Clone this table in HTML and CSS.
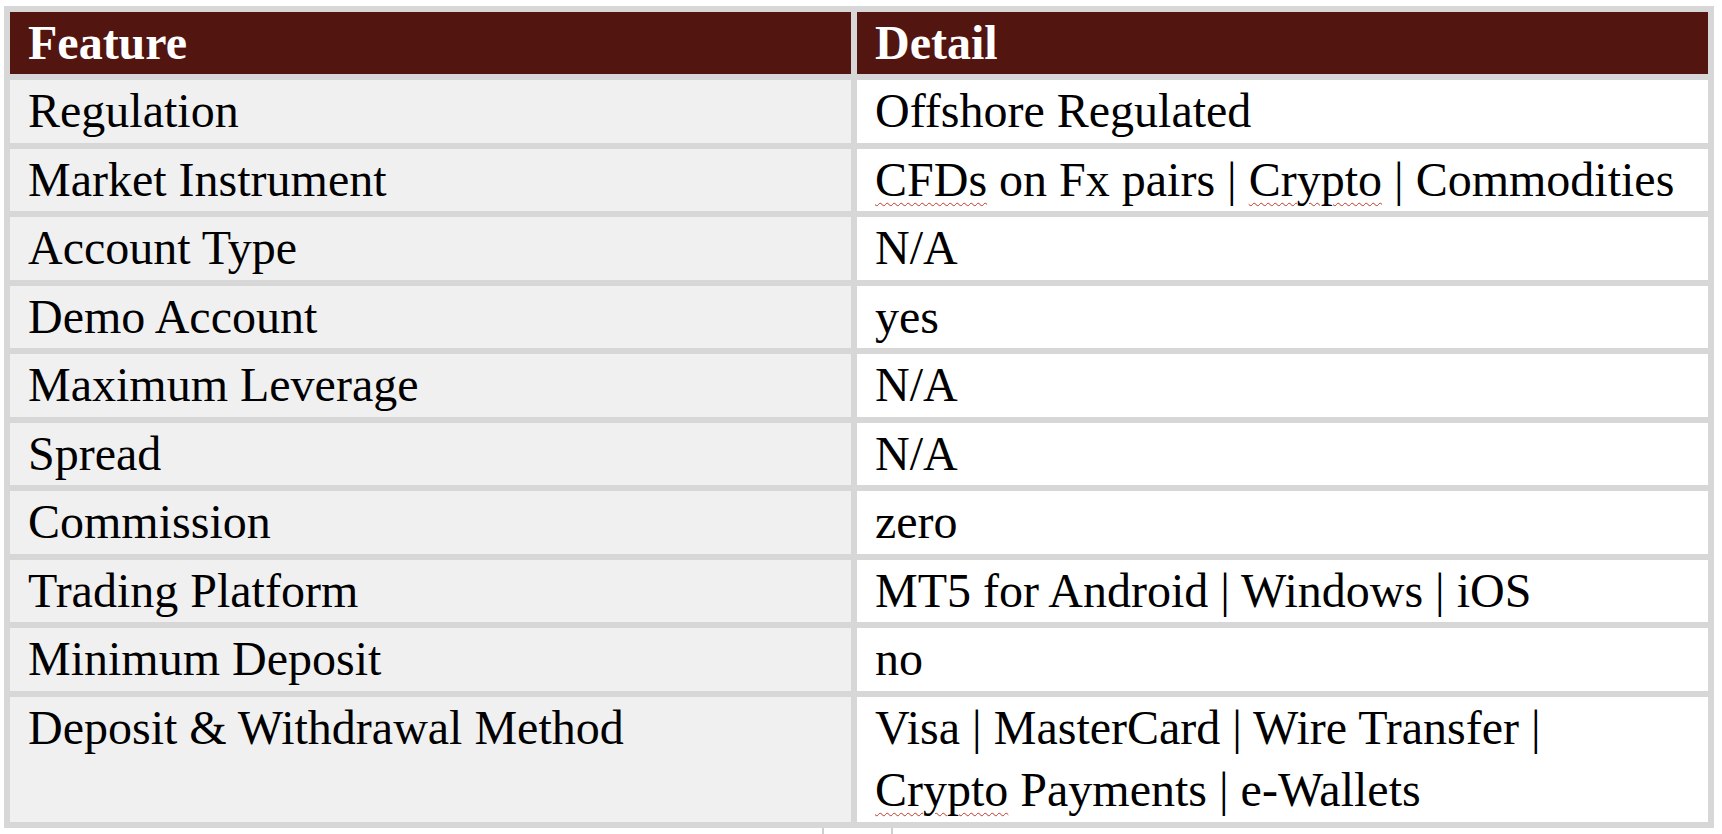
FILE: index.html
```html
<!DOCTYPE html>
<html lang="en">
<head>
<meta charset="utf-8">
<title>Feature table</title>
<link rel="stylesheet" href="styles.css">
</head>
<body>
<table class="spec">
  <thead>
    <tr><th class="c1">Feature</th><th class="c2">Detail</th></tr>
  </thead>
  <tbody>
    <tr><td class="c1">Regulation</td><td class="c2">Offshore Regulated</td></tr>
    <tr><td class="c1">Market Instrument</td><td class="c2"><span class="sp">CFDs</span> on Fx pairs | <span class="sp">Crypto</span> | Commodities</td></tr>
    <tr><td class="c1">Account Type</td><td class="c2">N/A</td></tr>
    <tr><td class="c1">Demo Account</td><td class="c2">yes</td></tr>
    <tr><td class="c1">Maximum Leverage</td><td class="c2">N/A</td></tr>
    <tr><td class="c1">Spread</td><td class="c2">N/A</td></tr>
    <tr><td class="c1">Commission</td><td class="c2">zero</td></tr>
    <tr><td class="c1">Trading Platform</td><td class="c2">MT5 for Android | Windows | iOS</td></tr>
    <tr><td class="c1">Minimum Deposit</td><td class="c2">no</td></tr>
    <tr><td class="c1">Deposit &amp; Withdrawal Method</td><td class="c2">Visa | MasterCard | Wire Transfer |<br><span class="sp">Crypto</span> Payments | e-Wallets</td></tr>
  </tbody>
</table>
<div class="handle"></div>
</body>
</html>
```
FILE: styles.css
```css
html, body {
  margin: 0;
  padding: 0;
  background: #ffffff;
}
body {
  font-family: "Liberation Serif", "Times New Roman", serif;
  color: #000;
  overflow: hidden;
}
.spec {
  margin: 6px 0 0 4px;
  border-collapse: separate;
  border-spacing: 6px;
  background: #d7d7d7;
  table-layout: fixed;
  width: 1710px;
}
.spec th,
.spec td {
  font-size: 48px;
  line-height: 62.5px;
  padding: 0 18px;
  text-align: left;
  vertical-align: top;
  white-space: nowrap;
}
.spec th {
  background: #531510;
  color: #ffffff;
  font-weight: bold;
  line-height: 62px;
}
.spec th.c1, .spec td.c1 { width: 805px; }
.spec th.c2, .spec td.c2 { width: 815px; }
.spec td.c1 { background: #f0f0f0; }
.spec td.c2 { background: #ffffff; }
.sp {
  text-decoration: underline wavy #c0392b;
  text-decoration-thickness: 1px;
  text-underline-offset: 6px;
}
.handle {
  margin-left: 822px;
  width: 71px;
  height: 8px;
  border-left: 2px solid #cfcfcf;
  border-right: 2px solid #cfcfcf;
  box-sizing: border-box;
}
```
